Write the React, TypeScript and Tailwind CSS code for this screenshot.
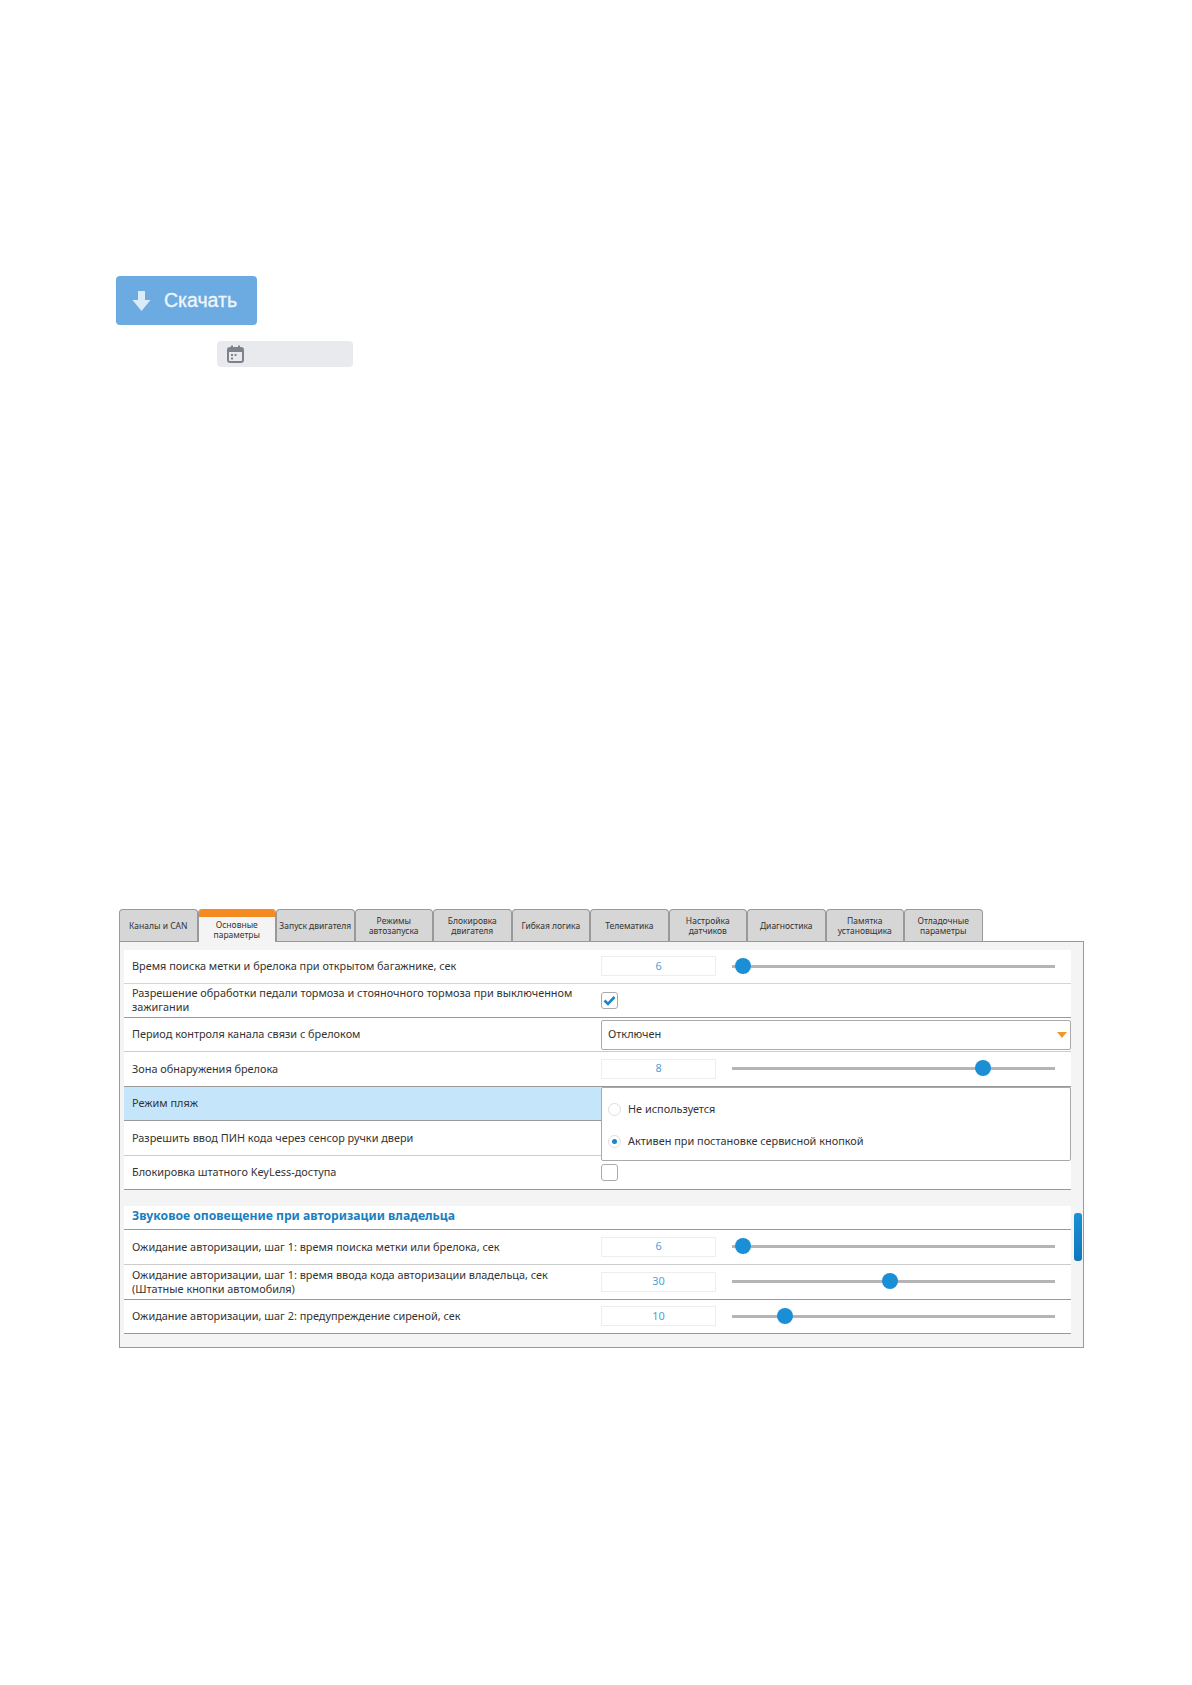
const font = "font-['Noto_Sans',sans-serif]";

const tabs = [
  "Каналы и CAN",
  "Основные параметры",
  "Запуск двигателя",
  "Режимы автозапуска",
  "Блокировка двигателя",
  "Гибкая логика",
  "Телематика",
  "Настройка датчиков",
  "Диагностика",
  "Памятка установщика",
  "Отладочные параметры",
];

const ValueSlider = ({ value, pos }: { value: number; pos: number }) => (
  <div className="flex items-center pb-[1px]">
    <div className="flex h-[20px] w-[115px] items-center justify-center border border-[#eeeeee] bg-white text-[#4f9fd6]">
      {value}
    </div>
    <div className="relative ml-[16px] h-[3px] w-[323px] bg-[#b5b5b5]">
      <div
        className="absolute top-[-7px] h-[16px] w-[16px] rounded-full bg-[#1b8fd6]"
        style={{ left: pos - 8 }}
      />
    </div>
  </div>
);

const CheckBox = ({ checked }: { checked?: boolean }) => (
  <div className="flex h-[17px] w-[17px] items-center justify-center rounded-[3px] border border-[#aaaaaa] bg-white">
    {checked && (
      <svg width="13" height="11" viewBox="0 0 13 11">
        <path d="M1.5 5.5 L5 9 L11.5 2" fill="none" stroke="#1a85c8" strokeWidth="2.6" />
      </svg>
    )}
  </div>
);

const Row = ({
  label,
  h,
  line,
  children,
  active,
}: {
  label: React.ReactNode;
  h: string;
  line: string;
  children?: React.ReactNode;
  active?: boolean;
}) => (
  <div className={`flex items-center border-b ${h} ${line} ${active ? "bg-[#c5e6fa]" : "bg-white"}`}>
    <div className="w-[476px] pb-[1px] pl-[8px] leading-[14px] text-[#333333]">{label}</div>
    <div className="ml-[1px] flex-1">{children}</div>
  </div>
);

export default function App() {
  return (
    <div className={`min-h-[1685px] bg-white pt-[276px] ${font}`}>
      <div className="ml-[116px] flex h-[49px] w-[141px] items-center rounded-[4px] bg-[#6cabe2] font-['Liberation_Sans',sans-serif] text-[19.5px] text-[#eef6fc]">
        <svg className="ml-[16px]" width="19" height="22" viewBox="0 0 19 22">
          <path d="M6 1 H13 V10 H18.5 L9.5 21 L0.5 10 H6 Z" fill="#dcebf8" />
        </svg>
        <span className="ml-[13px] [-webkit-text-stroke:0.3px_#eef6fc]">Скачать</span>
      </div>

      <div className="ml-[217px] mt-[16px] flex h-[26px] w-[136px] items-center rounded-[4px] bg-[#e9eaed] pl-[10px]">
        <svg width="17" height="18" viewBox="0 0 17 18">
          <rect x="1" y="3" width="15" height="14" rx="2" fill="#e9eaed" stroke="#7f828c" strokeWidth="2" />
          <rect x="1" y="3" width="15" height="4" fill="#7f828c" />
          <rect x="4" y="0.5" width="2" height="4" fill="#7f828c" />
          <rect x="11" y="0.5" width="2" height="4" fill="#7f828c" />
          <rect x="4" y="9" width="2" height="2" fill="#7f828c" />
          <rect x="7.5" y="9" width="2" height="2" fill="#7f828c" />
          <rect x="4" y="12.5" width="2" height="2" fill="#7f828c" />
        </svg>
      </div>

      <div className="ml-[119px] mt-[542px] w-[965px] text-[10.9px]">
        <div className="relative z-10 flex h-[33px] text-[8.5px] leading-[10px] text-[#333333]">
          {tabs.map((t) =>
            t === "Основные параметры" ? (
              <div
                key={t}
                className="flex h-[33px] w-[78.5px] flex-col overflow-hidden rounded-t-[4px] border-x border-[#999999] bg-[#f4f4f4]"
              >
                <div className="h-[8px] shrink-0 bg-[#f58a20]" />
                <div className="flex flex-1 items-center justify-center text-center">{t}</div>
              </div>
            ) : (
              <div
                key={t}
                className="flex h-[32px] w-[78.5px] items-center justify-center rounded-t-[4px] border border-b-0 border-[#999999] bg-[#d6d6d6] text-center"
              >
                {t}
              </div>
            ),
          )}
        </div>

        <div className="relative -mt-[1px] h-[407px] border border-[#999999] bg-[#f4f4f4] pl-[4px] pr-[12px] pt-[8px]">
          <Row h="h-[34px]" line="border-[#d5d5d5]" label="Время поиска метки и брелока при открытом багажнике, сек">
            <ValueSlider value={6} pos={11} />
          </Row>
          <Row
            h="h-[34px]"
            line="border-[#999999]"
            label="Разрешение обработки педали тормоза и стояночного тормоза при выключенном зажигании"
          >
            <CheckBox checked />
          </Row>
          <Row h="h-[34px]" line="border-[#cccccc]" label="Период контроля канала связи с брелоком">
            <div className="flex h-[30px] items-center justify-between rounded-[2px] border border-[#aaaaaa] bg-white pl-[6px] pr-[3px] text-[#333333]">
              Отключен
              <svg width="10" height="6" viewBox="0 0 10 6">
                <path d="M0 0 H10 L5 6 Z" fill="#f0962e" />
              </svg>
            </div>
          </Row>
          <Row h="h-[35px]" line="border-[#999999]" label="Зона обнаружения брелока">
            <ValueSlider value={8} pos={251} />
          </Row>
          <div className="relative">
            <Row h="h-[34px]" line="border-[#999999]" active label="Режим пляж" />
            <div className="absolute left-[477px] right-0 top-0 z-10 h-[74px] rounded-[2px] border border-[#aaaaaa] bg-white pl-[6px] text-[#333333]">
              <div className="flex h-[41px] items-center pt-[2px]">
                <div className="h-[13px] w-[13px] rounded-full border border-[#dddddd]" />
                <span className="ml-[7px]">Не используется</span>
              </div>
              <div className="flex h-[24px] items-center">
                <div className="flex h-[13px] w-[13px] items-center justify-center rounded-full border border-[#dddddd]">
                  <div className="h-[5px] w-[5px] rounded-full bg-[#1a85c8]" />
                </div>
                <span className="ml-[7px]">Активен при постановке сервисной кнопкой</span>
              </div>
            </div>
          </div>
          <Row h="h-[35px]" line="border-[#cccccc]" label="Разрешить ввод ПИН кода через сенсор ручки двери" />
          <Row h="h-[34px]" line="border-[#999999]" label="Блокировка штатного KeyLess-доступа">
            <CheckBox />
          </Row>

          <div className="mt-[16px] flex h-[24px] items-center border-b border-[#999999] bg-white pb-[2px] pl-[8px] text-[12.2px] font-bold text-[#1a7fc1]">
            Звуковое оповещение при авторизации владельца
          </div>
          <Row h="h-[35px]" line="border-[#cccccc]" label="Ожидание авторизации, шаг 1: время поиска метки или брелока, сек">
            <ValueSlider value={6} pos={11} />
          </Row>
          <Row
            h="h-[35px]"
            line="border-[#999999]"
            label={
              <>
                Ожидание авторизации, шаг 1: время ввода кода авторизации владельца, сек
                <br />
                (Штатные кнопки автомобиля)
              </>
            }
          >
            <ValueSlider value={30} pos={158} />
          </Row>
          <Row h="h-[34px]" line="border-[#999999]" label="Ожидание авторизации, шаг 2: предупреждение сиреной, сек">
            <ValueSlider value={10} pos={53} />
          </Row>

          <div className="absolute right-[1px] top-[271px] h-[48px] w-[8px] rounded-[3px] bg-gradient-to-b from-[#1b8fd6] to-[#0f76bd]" />
        </div>
      </div>
    </div>
  );
}
